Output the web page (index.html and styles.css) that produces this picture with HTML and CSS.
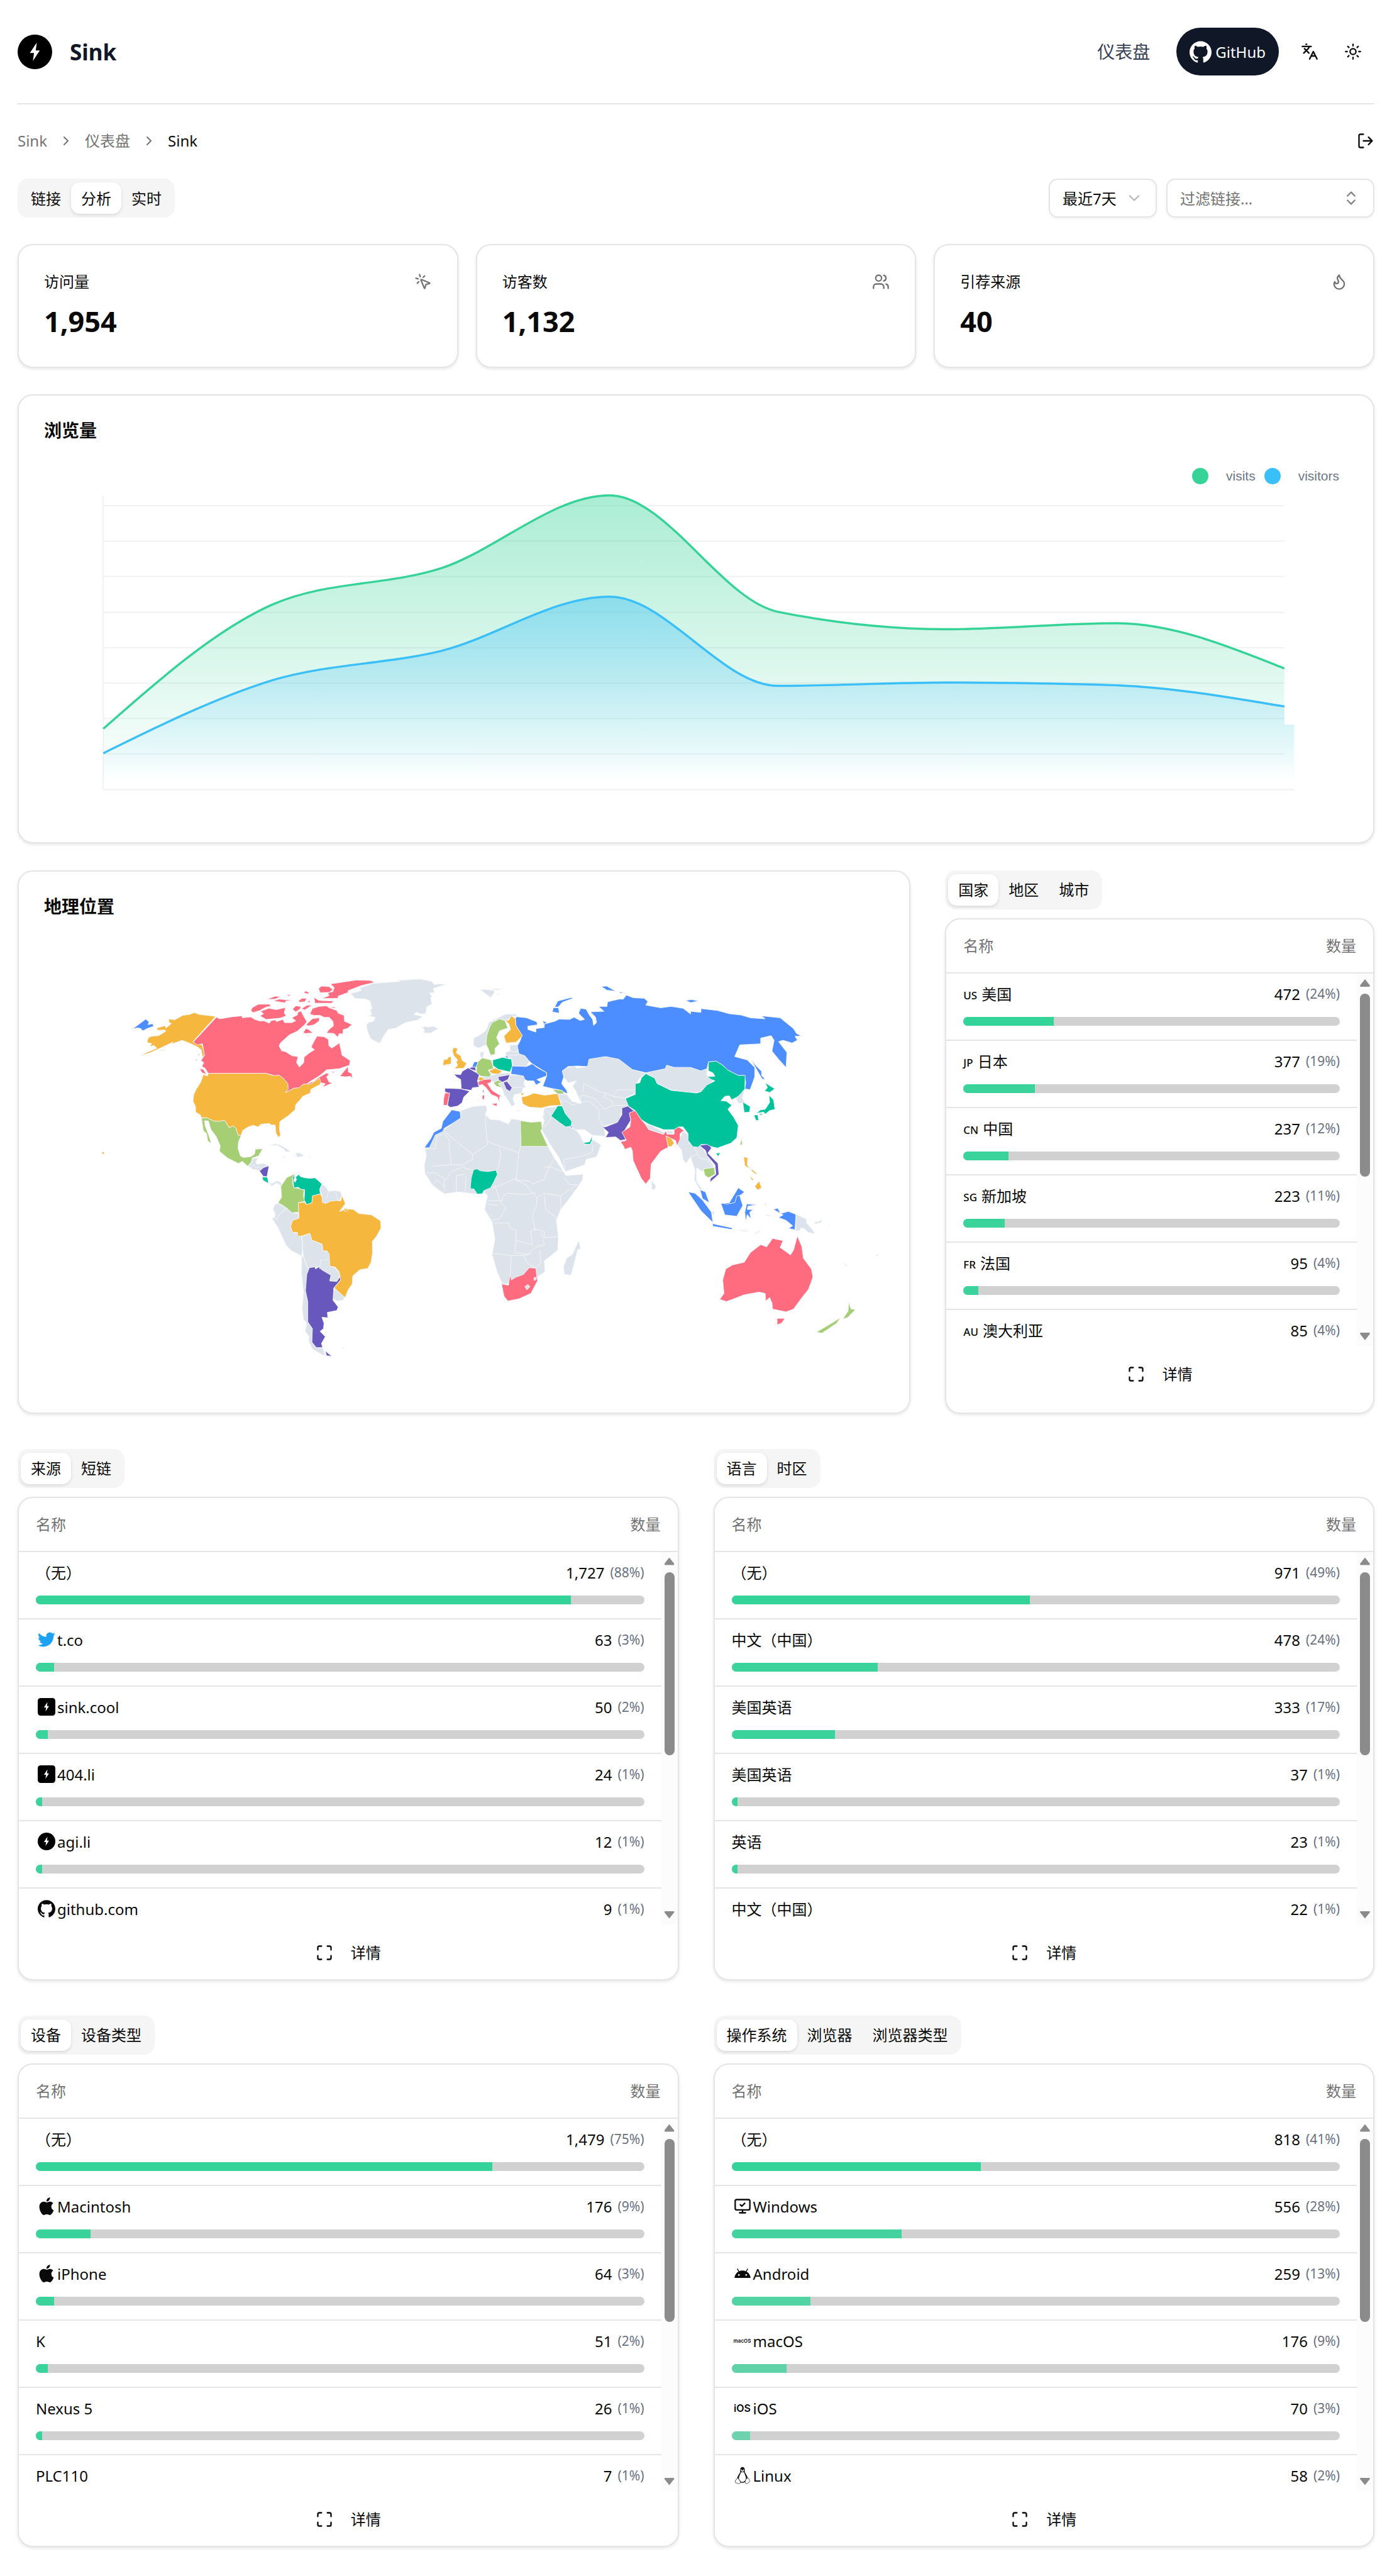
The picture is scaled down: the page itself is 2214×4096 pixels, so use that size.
FILE: index.html
```html
<!DOCTYPE html>
<html lang="zh-CN">
<head>
<meta charset="utf-8">
<meta name="viewport" content="width=device-width, initial-scale=1">
<title>Sink</title>
<link rel="stylesheet" href="styles.css">
</head>
<body>
<svg class="sprite" aria-hidden="true">
  <symbol id="i-bolt" viewBox="0 0 24 24"><circle cx="12" cy="12" r="12" fill="#000"/><path d="M13.3 5.6 8.5 12.8h2.9l-.8 5.5L15.4 11h-2.8Z" fill="#fff"/></symbol>
  <symbol id="i-bolt-square" viewBox="0 0 24 24"><rect width="24" height="24" rx="4" fill="#000"/><path d="M13.3 5.6 8.5 12.8h2.9l-.8 5.5L15.4 11h-2.8Z" fill="#fff"/></symbol>
  <symbol id="i-github" viewBox="0 0 24 24"><path fill="currentColor" d="M12 .297c-6.63 0-12 5.373-12 12 0 5.303 3.438 9.8 8.205 11.385.6.113.82-.258.82-.577 0-.285-.01-1.04-.015-2.04-3.338.724-4.042-1.61-4.042-1.61C4.422 18.07 3.633 17.7 3.633 17.7c-1.087-.744.084-.729.084-.729 1.205.084 1.838 1.236 1.838 1.236 1.07 1.835 2.809 1.305 3.495.998.108-.776.417-1.305.76-1.605-2.665-.3-5.466-1.332-5.466-5.93 0-1.31.465-2.38 1.235-3.22-.135-.303-.54-1.523.105-3.176 0 0 1.005-.322 3.3 1.23.96-.267 1.98-.399 3-.405 1.02.006 2.04.138 3 .405 2.28-1.552 3.285-1.23 3.285-1.23.645 1.653.24 2.873.12 3.176.765.84 1.23 1.91 1.23 3.22 0 4.61-2.805 5.625-5.475 5.92.42.36.81 1.096.81 2.22 0 1.606-.015 2.896-.015 3.286 0 .315.21.69.825.57C20.565 22.092 24 17.592 24 12.297c0-6.627-5.373-12-12-12"/></symbol>
  <symbol id="i-twitter" viewBox="0 0 24 24"><path fill="#1da1f2" d="M23.953 4.57a10 10 0 01-2.825.775 4.958 4.958 0 002.163-2.723c-.951.555-2.005.959-3.127 1.184a4.92 4.92 0 00-8.384 4.482C7.69 8.095 4.067 6.13 1.64 3.162a4.822 4.822 0 00-.666 2.475c0 1.71.87 3.213 2.188 4.096a4.904 4.904 0 01-2.228-.616v.06a4.923 4.923 0 003.946 4.827 4.996 4.996 0 01-2.212.085 4.936 4.936 0 004.604 3.417 9.867 9.867 0 01-6.102 2.105c-.39 0-.779-.023-1.17-.067a13.995 13.995 0 007.557 2.209c9.053 0 13.998-7.496 13.998-13.985 0-.21 0-.42-.015-.63A9.935 9.935 0 0024 4.59z"/></symbol>
  <symbol id="i-apple" viewBox="0 0 24 24"><path fill="currentColor" d="M12.152 6.896c-.948 0-2.415-1.078-3.96-1.04-2.04.027-3.91 1.183-4.961 3.014-2.117 3.675-.546 9.103 1.519 12.09 1.013 1.454 2.208 3.09 3.792 3.039 1.52-.065 2.09-.987 3.935-.987 1.831 0 2.35.987 3.96.948 1.637-.026 2.676-1.48 3.676-2.948 1.156-1.688 1.636-3.325 1.662-3.415-.039-.013-3.182-1.221-3.22-4.857-.026-3.04 2.48-4.494 2.597-4.559-1.429-2.09-3.623-2.324-4.39-2.376-2-.156-3.675 1.09-4.61 1.09zM15.53 3.83c.843-1.012 1.4-2.427 1.245-3.83-1.207.052-2.662.805-3.532 1.818-.78.896-1.454 2.338-1.273 3.714 1.338.104 2.715-.688 3.559-1.701"/></symbol>
  <symbol id="i-android" viewBox="0.8 0 22.4 24"><path fill="currentColor" d="M17.6 9.48l1.84-3.18c.16-.31.04-.69-.26-.85-.29-.15-.65-.06-.83.22l-1.88 3.24c-2.86-1.21-6.08-1.21-8.94 0L5.65 5.67c-.19-.29-.58-.38-.87-.2-.28.18-.37.54-.22.83L6.4 9.48C3.3 11.25 1.28 14.44 1 18h22c-.28-3.56-2.3-6.75-5.4-8.52zM7 15.25c-.69 0-1.25-.56-1.25-1.25s.56-1.25 1.25-1.25 1.25.56 1.25 1.25-.56 1.25-1.25 1.25zm10 0c-.69 0-1.25-.56-1.25-1.25s.56-1.25 1.25-1.25 1.25.56 1.25 1.25-.56 1.25-1.25 1.25z"/></symbol>
  <symbol id="i-monitor" viewBox="0 0 24 24"><g class="line"><path d="m9 10 2 2 4-4"/><rect width="20" height="14" x="2" y="3" rx="2"/><path d="M12 17v4M8 21h8"/></g></symbol>
  <symbol id="i-linux" viewBox="0 0 24 24"><path d="M12 .6c-2.1 0-3.2 1.7-3.1 3.7.1 2.700-.2 4-1.600 6-1.300 1.900-2.600 4.100-2.500 6.200L8 20.500c.8 1.200 2.200 1.500 4 1.500s3-.4 3.900-1.500l3.100-4c.1-2.200-1.100-4.300-2.400-6.200-1.300-2-1.700-3.300-1.600-6C15.100 2.300 14.100.6 12 .6Z" fill="#111"/><path d="M12 7.600c-.9.600-1.700.3-2.200 0-.3 2.400-2.100 4.900-2.700 7.200-.4 1.700.2 2.800 1.300 4.200 1 1.300 2.100 2 3.600 2s2.700-.8 3.500-2.100c.9-1.500 1.500-2.600 1.100-4.200-.6-2.200-2.100-4.800-2.500-7.100-.600.500-1.400.6-2.100 0Z" fill="#fff"/><path d="M4.900 15.900c.9-.3 1.600.8 2.400 2 .8 1.300 2.100 2.400 1.900 3.600-.1 1.300-1.500 2-2.900 1.700-1.300-.3-2.200-.9-3.700-1.200-.8-.2-.3-1.500-.5-2.500-.2-1.300 1.200-.8 1.600-1.600.4-.7.400-1.700 1.200-2Zm13.800-.1c-1 .1-1.700.9-2.300 2.200-.6 1.400-1.100 3-.6 4.200.5 1.300 1.900 1.300 2.900.6 1-.8 1.900-1.400 3.200-2.200.6-.5-.2-1.200-.6-2-.5-.9.100-1.900-.8-2.300-.6-.3-1.100-.6-1.800-.5Z" fill="#fff" stroke="#111" stroke-width=".6"/><path d="M10.500 3.900a.7.9 0 1 0 .1 0Zm2.700 0a.7.9 0 1 0 .1 0ZM10 6.200 12 5.300l2 .9-2 1.100Z" fill="#fff"/></symbol>
  <symbol id="i-maximize" viewBox="0 0 24 24"><path class="line" d="M8 3H5a2 2 0 0 0-2 2v3M21 8V5a2 2 0 0 0-2-2h-3M3 16v3a2 2 0 0 0 2 2h3M16 21h3a2 2 0 0 0 2-2v-3"/></symbol>
  <symbol id="i-chevron-right" viewBox="0 0 24 24"><path class="line" d="m9 18 6-6-6-6"/></symbol>
</svg>

<div class="page">
  <header class="header">
    <a class="brand" href="#"><svg class="brand-mark" aria-hidden="true"><use href="#i-bolt"/></svg><span>Sink</span></a>
    <nav class="nav">
      <a class="nav-link" href="#">仪表盘</a>
      <a class="github" href="#"><svg aria-hidden="true"><use href="#i-github"/></svg>GitHub</a>
      <div class="nav-tools">
        <button class="icon-btn" type="button" aria-label="语言"><svg class="icon line" viewBox="0 0 24 24"><path d="m5 8 6 6M4 14l6-6 2-3M2 5h12M7 2h1M22 22l-5-10-5 10M14 18h6"/></svg></button>
        <button class="icon-btn" type="button" aria-label="主题"><svg class="icon line" viewBox="0 0 24 24"><circle cx="12" cy="12" r="4"/><path d="M12 2v2M12 20v2M4.930 4.930l1.410 1.410M17.660 17.660l1.410 1.410M2 12h2M20 12h2M6.340 17.660l-1.410 1.410M19.070 4.930l-1.410 1.410"/></svg></button>
      </div>
    </nav>
  </header>

  <div class="crumb-row">
    <nav class="crumbs">
      <a href="#">Sink</a><svg aria-hidden="true"><use href="#i-chevron-right"/></svg><a href="#">仪表盘</a><svg aria-hidden="true"><use href="#i-chevron-right"/></svg><span class="current">Sink</span>
    </nav>
    <button class="logout" type="button" aria-label="退出"><svg class="icon line" viewBox="0 0 24 24"><path d="M9 21H5a2 2 0 0 1-2-2V5a2 2 0 0 1 2-2h4M16 17l5-5-5-5M21 12H9"/></svg></button>
  </div>

  <div class="toolbar">
    <div class="tabs"><button type="button">链接</button><button type="button" class="active">分析</button><button type="button">实时</button></div>
    <div class="filters">
      <label class="field"><select aria-label="时间范围"><option>最近7天</option></select><svg class="icon line faded muted" viewBox="0 0 24 24"><path d="m6 9 6 6 6-6"/></svg></label>
      <label class="field field-wide"><input type="text" placeholder="过滤链接..." aria-label="过滤链接"><svg class="icon line faded" viewBox="0 0 24 24"><path d="m7 15 5 5 5-5M7 9l5-5 5 5"/></svg></label>
    </div>
  </div>

  <section class="stats">
    <div class="card stat"><div class="stat-head"><span>访问量</span><svg class="icon line" viewBox="0 0 24 24"><path d="M14 4.100 12 6M5.100 8l-2.900-.8M6 12l-1.900 2M7.200 2.200 8 5.100M9.037 9.690a.498.498 0 0 1 .653-.653l11 4.500a.5.5 0 0 1-.074.949l-4.349 1.041a1 1 0 0 0-.740.739l-1.040 4.350a.5.5 0 0 1-.950.074z"/></svg></div><strong>1,954</strong></div>
    <div class="card stat"><div class="stat-head"><span>访客数</span><svg class="icon line" viewBox="0 0 24 24"><path d="M16 21v-2a4 4 0 0 0-4-4H6a4 4 0 0 0-4 4v2"/><circle cx="9" cy="7" r="4"/><path d="M22 21v-2a4 4 0 0 0-3-3.870M16 3.130a4 4 0 0 1 0 7.750"/></svg></div><strong>1,132</strong></div>
    <div class="card stat"><div class="stat-head"><span>引荐来源</span><svg class="icon line" viewBox="0 0 24 24"><path d="M8.500 14.500A2.500 2.500 0 0 0 11 12c0-1.380-.5-2-1-3-1.072-2.143-.224-4.054 2-6 .5 2.500 2 4.900 4 6.500 2 1.600 3 3.500 3 5.500a7 7 0 1 1-14 0c0-1.153.433-2.294 1-3a2.500 2.500 0 0 0 2.500 2.500z"/></svg></div><strong>40</strong></div>
  </section>

  <section class="card panel">
    <h2>浏览量</h2>
    <div class="legend"><span class="key key-visits">visits</span><span class="key key-visitors">visitors</span></div>
    <svg class="plot" viewBox="82 900 2398 600" role="img" aria-label="浏览量">
      <defs>
        <linearGradient id="g-visits" x1="0" y1="909" x2="0" y2="1440" gradientUnits="userSpaceOnUse"><stop offset="0" stop-color="#36d399" stop-opacity=".42"/><stop offset="1" stop-color="#36d399" stop-opacity="0"/></linearGradient>
        <linearGradient id="g-visitors" x1="0" y1="1095" x2="0" y2="1430" gradientUnits="userSpaceOnUse"><stop offset="0" stop-color="#3abff8" stop-opacity=".42"/><stop offset="1" stop-color="#3abff8" stop-opacity="0"/></linearGradient>
      </defs>
      <path class="grid" d="M191 928H2363M191 993H2363M191 1058H2363M191 1124H2363M191 1189H2363M191 1254H2363M191 1319H2363M191 1384H2363M191 1450H2381M191 909V1450"/>
      <path fill="url(#g-visits)" d="M191 1338C294 1247 398 1156 501 1110C605 1065 708 1076 812 1043C915 1009 1018 909 1122 909C1226 909 1329 1102 1432 1123C1536 1144 1639 1155 1743 1155C1846 1155 1950 1144 2053 1144C2157 1144 2260 1186 2363 1227V1330H2381V1450H191Z"/>
      <path fill="url(#g-visitors)" d="M191 1383C294 1332 398 1281 501 1249C605 1218 708 1220 812 1195C915 1169 1018 1095 1122 1095C1226 1095 1329 1259 1432 1259C1536 1259 1639 1253 1743 1253C1846 1253 1950 1255 2053 1258C2157 1262 2260 1280 2363 1297V1330H2381V1450H191Z"/>
      <path class="curve curve-visits" d="M191 1338C294 1247 398 1156 501 1110C605 1065 708 1076 812 1043C915 1009 1018 909 1122 909C1226 909 1329 1102 1432 1123C1536 1144 1639 1155 1743 1155C1846 1155 1950 1144 2053 1144C2157 1144 2260 1186 2363 1227"/>
      <path class="curve curve-visitors" d="M191 1383C294 1332 398 1281 501 1249C605 1218 708 1220 812 1195C915 1169 1018 1095 1122 1095C1226 1095 1329 1259 1432 1259C1536 1259 1639 1253 1743 1253C1846 1253 1950 1255 2053 1258C2157 1262 2260 1280 2363 1297"/>
    </svg>
  </section>

  <section class="geo">
    <div class="card panel geo-map">
      <h2>地理位置</h2>
      <svg class="map" viewBox="82 1699 1544 850" role="img" aria-label="地理位置">
        <g transform="translate(160 1760) scale(.4719 .4974)">
          <path class="none" d="M1030 132 1070 122 1065 112 1115 95 1220 88 1215 84 1300 79 1345 88 1355 100 1375 97 1400 100 1370 107 1350 114 1355 128 1335 130 1345 143 1340 150 1345 170 1325 182 1320 207 1298 207 1285 200 1275 210 1308 217 1290 230 1240 240 1205 260 1175 265 1160 285 1142 316 1108 300 1096 275 1090 250 1097 240 1118 235 1125 220 1098 215 1112 210 1105 195 1112 187 1105 160 1085 152 1045 150ZM1303 254 1312 258 1318 253 1330 257 1350 253 1370 262 1340 278 1312 277 1318 268ZM995 1438 1005 1440 998 1443Z
            M715 694 735 687 760 695 780 706 795 717 775 716 768 706 740 692ZM812 722 830 721 848 731 826 737 808 734 820 732ZM762 736 777 738 768 739ZM862 736 870 737 865 738Z
            M630 770 645 755 643 742 668 740 660 755 664 763 690 760 710 768 690 774 674 788 665 784 650 782ZM709 830 722 835 742 824 758 832 760 845 750 836 740 832 722 843Z
            M917 836 935 850 943 863 968 860 990 865 995 880 985 895 970 900 926 908 915 900 918 880 908 857ZM733 912 746 907 776 924 770 935 750 950 742 967 733 962 736 948 727 930Z
            M724 965 730 958 742 967 750 950 776 924 800 942 824 945 828 963 803 970 795 995 808 1018 822 1016 838 1030 842 1070 838 1102 795 1080 778 1062 745 995Z
            M838 1030 870 1018 878 1043 918 1060 922 1083 940 1085 947 1100 948 1140 968 1145 984 1165 985 1185 975 1195 947 1194 952 1173 908 1150 905 1142 890 1142 870 1148 860 1145 845 1105 842 1070ZM963 1222 1005 1250 1000 1265 975 1268 960 1258Z
            M838 1102 845 1105 860 1145 868 1148 858 1170 853 1230 862 1270 862 1325 880 1370 878 1420 895 1440 920 1442 930 1470 915 1465 880 1445 865 1415 868 1400 852 1380 858 1350 845 1335 840 1290 846 1240 838 1170Z"/>
          <path class="orange" d="M503 217 414 311 450 322 461 357 452 367 447 340 430 328 400 315 373 305 330 319 338 311 312 323 278 338 245 352 208 363 240 348 275 334 262 324 248 328 254 317 236 313 240 297 253 290 282 288 310 271 305 267 277 268 274 260 306 251 310 260 331 243 322 240 320 227 345 229 375 213 400 210 421 203 440 210 470 213ZM282 344 298 339 300 342ZM434 357 441 354 438 364ZM60 720 66 716 70 722 64 727Z
            M474 427 700 427 715 432 735 436 750 433 770 448 784 465 786 485 775 498 808 482 828 480 845 467 875 466 905 444 913 452 910 468 890 478 874 486 872 500 842 512 832 525 815 542 812 562 785 584 753 605 751 630 755 655 748 664 738 648 735 618 720 618 712 612 680 615 668 625 650 619 630 625 608 638 602 657 590 655 582 630 570 621 556 628 538 601 520 604 498 604 468 591 448 591 443 580 425 570 425 550 415 530 418 505 427 487 445 460 455 432 472 437Z"/>
          <path class="blue" d="M180 263 231 227 244 238 239 247 258 244 262 253 238 261 219 270 212 262 200 259Z"/>
          <path class="pink" d="M506 220 520 226 545 222 570 218 607 215 606 222 640 219 655 228 675 234 690 233 712 242 720 232 735 230 740 236 765 228 771 240 800 240 815 233 800 222 822 211 822 202 836 197 845 215 858 236 850 247 820 272 790 285 755 315 750 326 760 344 775 347 800 362 824 366 818 387 829 404 846 388 848 367 868 352 888 340 875 330 888 306 898 290 925 292 935 298 942 302 944 325 955 334 970 325 985 315 992 345 995 360 1027 380 1024 397 985 410 935 414 912 433 870 458 860 465 885 457 905 442 935 426 945 430 935 440 945 460 960 462 920 478 930 465 912 462 908 444 875 466 845 467 828 480 808 482 775 498 786 485 784 465 770 448 750 433 735 436 700 427 474 427 462 408 450 402 457 387 446 380 460 360 452 318 432 322 416 312Z
            M1018 402 1020 422 1033 428 1036 445 1028 438 1010 440 987 438ZM441 411 455 412 467 430 450 425ZM425 376 432 376 427 381ZM950 97 1050 83 1105 84 1122 91 1070 103 1018 122 1020 128 980 142 980 150 915 151 945 140 940 130 960 125 965 110ZM904 115 915 105 945 107 960 118 945 128 910 129ZM886 147 905 158 963 160 955 168 920 168 890 168ZM676 215 690 207 678 198 710 187 740 192 775 184 770 205 778 215 755 223 700 228ZM640 193 648 183 670 172 713 172 718 180 700 182 675 195 648 203ZM727 160 750 153 803 157 775 160 775 167 750 163ZM703 154 735 142 755 144 735 153ZM825 160 840 150 858 150 850 163 830 164ZM845 129 855 123 868 130 862 134ZM780 138 797 136 788 142ZM803 190 815 178 835 180 832 190 815 200ZM838 188 860 175 878 176 850 193ZM860 162 872 158 868 167ZM870 208 880 188 905 180 935 178 945 185 975 195 980 205 1003 213 1005 235 1034 247 1015 262 1000 265 998 282 985 280 978 293 965 280 935 278 945 265 962 252 960 235 945 220 925 220 910 213 885 213ZM855 248 880 225 908 222 905 235 885 248 865 252ZM845 275 855 262 865 265 882 278 850 280ZM855 288 865 287 858 291ZM945 182 970 182 965 187ZM955 420 968 422 960 425Z"/>
          <path class="green" d="M448 593 468 591 498 604 520 604 538 601 556 628 570 621 582 630 590 655 602 657 592 680 590 705 600 733 612 738 640 735 655 725 658 707 686 706 670 732 645 740 642 755 628 770 607 752 592 760 550 740 518 715 521 695 505 660 485 635 475 603 460 602 462 620 470 640 478 660 486 687 472 675 468 650 455 638ZM815 797 802 812 803 835 808 850 830 853 847 858 845 880 850 900 825 905 828 962 824 940 800 942 780 925 765 915 746 905 760 885 757 845 780 812Z"/>
          <path class="violet" d="M674 788 690 775 711 769 703 809 688 807ZM868 1145 890 1142 892 1150 905 1142 915 1152 952 1173 947 1194 975 1196 988 1178 990 1190 963 1220 960 1265 980 1290 975 1303 938 1310 940 1330 917 1328 925 1350 923 1370 910 1380 930 1400 915 1425 920 1440 895 1440 878 1420 880 1370 862 1345 862 1270 853 1230 858 1170ZM930 1453 956 1472 935 1470Z"/>
          <path class="teal" d="M684 810 705 811 709 834 688 822ZM803 812 812 800 808 822 812 830 818 820 815 810 828 800 832 808 850 813 870 815 890 813 917 836 908 855 911 872 880 880 878 905 858 912 848 895 850 857 835 855 825 848 808 850Z"/>
          <path class="orange" d="M911 872 918 885 918 903 930 908 950 900 970 897 990 898 996 880 1008 908 985 938 1005 930 1020 928 1040 930 1060 945 1110 950 1145 972 1147 998 1130 1028 1113 1048 1114 1090 1108 1125 1095 1148 1065 1152 1037 1175 1035 1205 1020 1225 1007 1255 965 1220 990 1190 984 1160 968 1142 948 1140 945 1095 937 1083 922 1083 918 1058 878 1043 870 1018 838 1028 822 1028 822 1015 803 1015 795 992 803 970 828 962 825 905 848 903 858 912 878 905 880 880ZM1003 925 1022 928 1015 937 1003 936Z"/>
          <path class="border" d="M943 863 935 890M970 865 980 898M842 1070 838 1030M908 1150 912 1118 942 1115M658 764 640 775M674 775 655 775"/>
        </g>
        <g transform="translate(760 1760) scale(.5485 .4974)">
          <path class="none" d="M225 117 272 120 272 130 260 147ZM262 115 304 115 280 120ZM282 130 290 137 284 137ZM203 298 225 285 245 268 255 240 280 225 310 209 345 208 348 218 332 215 325 225 310 232 290 226 275 232 262 255 252 285 247 310 248 320 220 334 203 325ZM225 350 238 347 235 368 226 368ZM325 323 352 322 350 345 358 358 378 360 390 382 380 402 335 400 330 372 312 365 310 350 325 345Z
            M258 436 285 428 325 425 325 434 360 432 375 442 372 470 380 478 368 482 365 500 340 505 335 520 342 545 330 548 315 520 305 505 300 485 285 465 262 455 235 448 232 440ZM345 562 362 566 350 567Z
            M497 412 540 400 550 408 585 402 583 377 645 363 690 375 735 413 780 427 760 445 745 470 748 500 710 518 722 540 725 548 700 560 695 590 685 608 640 622 645 660 600 655 575 635 540 635 520 605 500 560 497 535 485 503 515 505 532 530 565 540 545 490 535 475 548 455 520 462 497 430Z
            M782 427 820 412 845 410 850 397 875 405 930 405 965 418 985 410 985 435 1012 440 995 470 965 495 935 500 865 488 818 465 810 445Z
            M440 555 485 550 500 548 510 575 532 605 530 625 545 635 560 655 575 690 595 690 603 672 630 692 615 735 580 745 575 765 510 790 490 740 460 690 432 635 440 600 435 590ZM780 615 800 620 845 648 840 657 800 640 778 628ZM848 640 870 640 870 650 852 650ZM800 822 815 845 808 858 800 855Z
            M905 640 922 655 925 685 945 700 965 692 985 730 1005 765 1010 780 975 778 970 790 950 775 950 825 970 858 960 855 943 820 945 785 930 735 915 760 905 745 900 710 885 690 895 665ZM1080 515 1110 492 1103 518 1112 535 1090 538ZM1283 948 1318 965 1318 980 1335 1000 1348 1020 1325 1015 1310 1000 1300 998 1295 1008 1282 1010ZM1343 978 1360 975 1370 966 1368 978 1350 983ZM1393 980 1397 985 1395 987ZM1443 1125 1458 1142 1450 1138ZM1552 1097 1558 1097 1558 1101 1552 1101ZM555 1045 562 1075 552 1078 530 1172 508 1170 505 1140 515 1110 535 1095Z
            M160 565 200 550 245 546 248 560 242 580 260 598 290 600 320 615 330 595 358 600 395 608 430 605 430 640 452 697 475 742 495 775 512 805 570 800 568 820 550 850 520 895 495 930 480 970 487 1030 485 1080 440 1120 442 1160 418 1178 410 1200 300 1205 282 1160 265 1095 275 1040 265 975 240 930 250 880 238 862 215 873 150 865 105 872 65 840 40 795 38 765 45 730 40 705 55 702 75 655 105 635 135 610 160 592Z"/>
          <path class="border" d="M570 495 572 465 600 480 625 495 645 500 670 512 685 488 748 488M563 530 560 510 580 510 610 520 640 560 660 550 690 545 725 545M622 560 625 600 640 622M497 530 515 530 535 545 560 535 590 530 622 560M645 500 640 515 668 530 670 545M670 512 710 518M505 745 560 735 600 720 603 690M440 555 465 585 455 605 440 625M505 745 510 790M325 434 320 460M332 480 370 478M303 460 280 470M325 345 352 348M312 365 355 358M945 705 960 740 985 745 1005 775M930 735 950 725
            M105 642 200 727 250 690 242 600 248 565M65 770 128 765 120 670 105 650M40 705 75 705 80 660 105 650M128 765 165 765 200 745 200 727M250 680 355 720 360 697M172 770 175 780 203 783M355 720 345 820 390 825 400 835 440 820 455 775 475 742M283 785 295 730 290 700M262 850 285 845 345 815M440 775 460 772 500 790M550 838 525 838 505 810M415 885 380 840 345 820M415 885 440 870 495 880 550 838M495 880 495 935M250 898 300 898 300 885 315 870 375 875 410 868M275 840 290 895 310 925 290 965 265 968M270 980 320 980 325 1000 345 1005 345 1045 400 1060 395 1010 410 1005 400 960 405 935 415 915 415 885M440 880 445 930 480 960M400 1000 440 1010 440 1035 487 1030M345 1045 342 1090 385 1095 410 1070 440 1060 430 1015M265 1092 330 1100 370 1100 395 1095M330 1100 325 1190M370 1100 385 1130 412 1145 428 1130 425 1080M105 865 105 820M145 865 145 805 175 800M175 865 178 805M45 795 75 795 110 820 130 790 172 770M65 840 80 820 105 845M250 910 285 915"/>
          <path class="blue" d="M348 218 380 222 415 237 417 248 385 253 385 265 412 275 412 262 440 258 440 245 475 235 490 227 525 228 540 220 560 232 575 228 555 205 562 187 580 190 590 210 602 228 605 250 615 240 612 220 595 200 640 198 622 180 650 180 652 163 690 153 705 153 715 138 738 148 775 150 787 162 780 175 830 185 865 180 905 187 930 208 930 198 965 202 965 188 1020 195 1060 207 1100 212 1130 222 1180 226 1168 215 1230 222 1275 262 1285 280 1302 290 1280 290 1288 305 1270 315 1240 305 1225 310 1253 350 1250 405 1225 375 1203 345 1210 305 1200 288 1165 297 1165 318 1095 322 1078 365 1120 378 1145 405 1145 440 1130 487 1112 485 1115 460 1110 435 1090 435 1055 415 1035 395 1015 382 990 385 985 410 965 418 930 405 875 405 850 397 845 410 780 425 735 413 690 375 645 365 590 375 585 402 550 400 520 402 500 418 505 440 498 465 515 490 518 503 490 488 465 483 435 475 448 437 448 425 400 392 388 380 375 362 355 355 350 325 358 310 365 288 345 250 343 225Z
            M467 200 470 185 488 185 490 205ZM475 182 485 160 530 147 536 150 500 165 487 182ZM630 106 650 105 660 112 680 124 650 120ZM690 126 710 128 695 131ZM913 157 935 155 957 160 930 166ZM1132 375 1150 400 1168 420 1168 435 1180 450 1170 448 1150 410ZM433 232 450 240 440 245ZM305 368 315 363 323 370ZM198 403 205 385 218 384 212 405ZM332 400 380 402 400 392 415 405 448 425 447 437 415 450 430 460 412 470 405 455 385 455 375 450 370 437 345 432 328 430ZM525 620 532 619 535 632ZM38 702 60 668 70 645 95 630 100 605 130 562 158 568 160 592 135 610 105 630 100 642 75 655 55 702Z
            M962 857 980 865 993 905 970 890ZM922 865 945 870 970 895 1000 940 1005 978 965 935ZM1003 982 1035 990 1070 998 1068 1004 1005 992ZM1032 908 1060 905 1090 850 1110 865 1095 880 1105 915 1085 955 1045 950ZM1118 910 1155 912 1122 918 1120 930 1140 930 1128 940 1133 965 1120 948 1115 975 1112 940ZM1208 930 1222 925 1232 945 1258 937 1283 948 1280 1005 1258 1000 1272 990 1250 970 1225 960 1240 950ZM1178 903 1184 915 1180 912ZM1185 950 1202 954 1188 953ZM1145 1020 1165 1008 1150 1015ZM1090 1005 1130 1010 1110 1010ZM1005 935 1010 948 1005 945Z"/>
          <path class="green" d="M290 226 308 232 318 260 290 270 280 295 290 318 275 335 275 357 260 360 252 335 245 320 247 290 255 262 265 240ZM218 385 232 370 262 378 270 410 252 415 262 432 255 440 228 438 213 425 213 400ZM270 462 285 453 303 460 285 465 297 480 280 475ZM467 486 500 490 507 503 485 503ZM360 602 395 608 430 605 433 630 428 640 452 697 362 697ZM1095 690 1103 667 1103 692ZM973 780 1010 775 1012 800 990 813 978 803ZM1460 1273 1468 1298 1483 1300 1455 1330 1440 1335 1458 1305ZM1352 1383 1395 1355 1432 1330 1420 1350 1370 1387Z"/>
          <path class="orange" d="M308 231 320 232 330 215 343 225 345 250 367 288 345 312 312 315 305 290 327 265 322 245ZM135 332 150 335 145 352 160 362 165 380 180 390 170 408 138 410 150 398 145 385 150 378 137 362 132 345ZM100 398 103 377 115 375 120 366 128 366 128 392ZM217 450 225 440 240 447 230 457ZM255 418 275 408 300 420 285 430 265 428ZM363 515 385 510 405 500 440 508 485 502 497 545 460 547 430 555 390 552 368 540ZM362 500 374 500 365 510ZM435 585 440 574 437 588ZM846 657 860 658 875 685 865 698 855 697ZM876 680 884 708 879 695ZM1108 735 1122 740 1120 765 1130 780 1112 768ZM1128 780 1140 785 1155 800 1145 797ZM1145 845 1160 825 1168 850 1155 858ZM1128 803 1142 822 1135 822Z"/>
          <path class="violet" d="M138 430 160 432 165 420 185 407 213 425 222 433 216 455 222 478 200 480 195 490 162 485 160 450 145 440ZM188 406 208 403 212 418 195 413ZM107 482 160 484 190 493 170 515 165 535 150 548 125 553 116 545 122 502 107 495ZM285 440 325 432 318 450 300 460 288 452ZM303 460 315 457 332 480 325 494 312 485ZM233 492 238 488 237 502ZM635 625 645 625 685 608 700 580 700 555 720 548 743 568 725 575 730 600 705 645 712 672 695 675 680 662 645 664 655 645ZM960 693 990 688 1000 703 988 722 1022 760 1025 800 995 830 997 815 1015 800 1012 765 985 730 980 712Z"/>
          <path class="pink" d="M107 500 123 500 115 545 102 545 103 520ZM218 458 240 450 262 448 262 460 250 465 265 490 298 513 290 513 290 533 283 515 262 505 245 480 232 468 220 472ZM262 540 283 537 280 549ZM232 508 240 508 239 523 232 523ZM745 565 765 598 780 618 790 635 840 653 846 640 852 652 875 652 875 635 890 625 908 638 895 650 895 670 885 695 880 675 870 670 848 658 855 700 830 715 798 762 795 815 780 836 765 815 738 750 735 712 730 700 710 708 705 695 695 680 715 675 700 645 727 625 730 600 725 573Z
            M297 1205 320 1210 325 1172 330 1190 345 1180 370 1170 390 1145 412 1147 415 1180 418 1192 395 1240 355 1260 318 1268 305 1250ZM1028 1262 1042 1240 1038 1190 1048 1150 1070 1135 1110 1125 1130 1090 1165 1060 1185 1068 1205 1037 1240 1045 1230 1070 1265 1098 1275 1080 1288 1028 1303 1068 1308 1110 1335 1150 1340 1180 1325 1225 1300 1260 1275 1298 1250 1308 1205 1298 1203 1275 1195 1255 1182 1268 1180 1240 1160 1235 1110 1245 1080 1258 1050 1270ZM1220 1332 1246 1332 1235 1350 1220 1356Z"/>
          <path class="none" d="M375 1215 385 1207 392 1215 382 1227ZM405 1182 412 1180 413 1190 406 1192Z"/>
          <path class="teal" d="M267 378 300 368 330 375 333 400 325 422 285 412 268 398ZM203 783 215 780 225 787 250 790 278 785 283 800 270 830 260 850 238 860 232 872 215 873 205 855 192 853 195 815ZM463 585 485 547 500 548 510 575 532 605 530 622 512 625 490 608ZM572 683 592 680 600 658 600 675 593 690 575 688Z
            M780 428 810 445 818 465 865 490 950 500 965 495 985 470 1012 455 1000 450 985 440 1012 438 1005 425 990 418 990 385 1015 382 1035 395 1055 415 1090 435 1113 435 1112 485 1090 512 1068 525 1060 510 1045 512 1032 528 1050 530 1068 545 1055 560 1075 590 1090 620 1085 665 1065 685 1020 703 1000 698 985 690 965 690 955 700 938 698 922 675 922 650 905 625 890 625 875 635 840 635 790 615 765 598 745 565 722 548 712 520 745 505 745 465 760 462 765 445Z
            M1016 722 1030 720 1022 735ZM1105 533 1130 550 1128 570 1110 572ZM1180 462 1212 484 1195 498 1178 492 1188 480ZM1193 508 1208 525 1213 560 1195 565 1180 578 1175 570 1150 575 1165 562 1180 560 1195 535ZM1142 582 1155 580 1158 600 1150 602ZM1160 577 1175 575 1165 582Z"/>
          <path class="border" d="M1032 905 1050 910 1078 905 1085 880 1100 876"/>
        </g>
      </svg>
    </div>

    <div class="column">
      <div class="tabs"><button type="button" class="active">国家</button><button type="button">地区</button><button type="button">城市</button></div>
      <div class="card list">
        <div class="list-body">
          <table>
            <thead><tr><th scope="col">名称</th><th scope="col">数量</th></tr></thead>
            <tbody>
              <tr><td><small>US</small>美国</td><td>472 <i>(24%)</i></td><td class="bar"><div style="width:24%"></div></td></tr>
              <tr><td><small>JP</small>日本</td><td>377 <i>(19%)</i></td><td class="bar"><div style="width:19%"></div></td></tr>
              <tr><td><small>CN</small>中国</td><td>237 <i>(12%)</i></td><td class="bar"><div style="width:12%"></div></td></tr>
              <tr><td><small>SG</small>新加坡</td><td>223 <i>(11%)</i></td><td class="bar"><div style="width:11%"></div></td></tr>
              <tr><td><small>FR</small>法国</td><td>95 <i>(4%)</i></td><td class="bar"><div style="width:4%"></div></td></tr>
              <tr><td><small>AU</small>澳大利亚</td><td>85 <i>(4%)</i></td><td class="bar"><div style="width:4%"></div></td></tr>
            </tbody>
          </table>
          <div class="scroll" aria-hidden="true"><b class="up"></b><b class="thumb"></b><b class="down"></b></div>
        </div>
        <button class="more" type="button"><svg aria-hidden="true"><use href="#i-maximize"/></svg>详情</button>
      </div>
    </div>
  </section>

  <section class="pair">
    <div class="column">
      <div class="tabs"><button type="button" class="active">来源</button><button type="button">短链</button></div>
      <div class="card list">
        <div class="list-body">
          <table>
            <thead><tr><th scope="col">名称</th><th scope="col">数量</th></tr></thead>
            <tbody>
              <tr><td>（无）</td><td>1,727 <i>(88%)</i></td><td class="bar"><div style="width:88%"></div></td></tr>
              <tr><td><svg aria-hidden="true"><use href="#i-twitter"/></svg>t.co</td><td>63 <i>(3%)</i></td><td class="bar"><div style="width:3%"></div></td></tr>
              <tr><td><svg aria-hidden="true"><use href="#i-bolt-square"/></svg>sink.cool</td><td>50 <i>(2%)</i></td><td class="bar"><div style="width:2%"></div></td></tr>
              <tr><td><svg aria-hidden="true"><use href="#i-bolt-square"/></svg>404.li</td><td>24 <i>(1%)</i></td><td class="bar"><div style="width:1%"></div></td></tr>
              <tr><td><svg aria-hidden="true"><use href="#i-bolt"/></svg>agi.li</td><td>12 <i>(1%)</i></td><td class="bar"><div style="width:1%"></div></td></tr>
              <tr><td><svg aria-hidden="true"><use href="#i-github"/></svg>github.com</td><td>9 <i>(1%)</i></td><td class="bar"><div style="width:1%"></div></td></tr>
            </tbody>
          </table>
          <div class="scroll" aria-hidden="true"><b class="up"></b><b class="thumb"></b><b class="down"></b></div>
        </div>
        <button class="more" type="button"><svg aria-hidden="true"><use href="#i-maximize"/></svg>详情</button>
      </div>
    </div>
    <div class="column">
      <div class="tabs"><button type="button" class="active">语言</button><button type="button">时区</button></div>
      <div class="card list">
        <div class="list-body">
          <table>
            <thead><tr><th scope="col">名称</th><th scope="col">数量</th></tr></thead>
            <tbody>
              <tr><td>（无）</td><td>971 <i>(49%)</i></td><td class="bar"><div style="width:49%"></div></td></tr>
              <tr><td>中文（中国）</td><td>478 <i>(24%)</i></td><td class="bar"><div style="width:24%"></div></td></tr>
              <tr><td>美国英语</td><td>333 <i>(17%)</i></td><td class="bar"><div style="width:17%"></div></td></tr>
              <tr><td>美国英语</td><td>37 <i>(1%)</i></td><td class="bar"><div style="width:1%"></div></td></tr>
              <tr><td>英语</td><td>23 <i>(1%)</i></td><td class="bar"><div style="width:1%"></div></td></tr>
              <tr><td>中文（中国）</td><td>22 <i>(1%)</i></td><td class="bar"><div style="width:1%"></div></td></tr>
            </tbody>
          </table>
          <div class="scroll" aria-hidden="true"><b class="up"></b><b class="thumb"></b><b class="down"></b></div>
        </div>
        <button class="more" type="button"><svg aria-hidden="true"><use href="#i-maximize"/></svg>详情</button>
      </div>
    </div>
  </section>

  <section class="pair">
    <div class="column">
      <div class="tabs"><button type="button" class="active">设备</button><button type="button">设备类型</button></div>
      <div class="card list">
        <div class="list-body">
          <table>
            <thead><tr><th scope="col">名称</th><th scope="col">数量</th></tr></thead>
            <tbody>
              <tr><td>（无）</td><td>1,479 <i>(75%)</i></td><td class="bar"><div style="width:75%"></div></td></tr>
              <tr><td><svg aria-hidden="true"><use href="#i-apple"/></svg>Macintosh</td><td>176 <i>(9%)</i></td><td class="bar"><div style="width:9%"></div></td></tr>
              <tr><td><svg aria-hidden="true"><use href="#i-apple"/></svg>iPhone</td><td>64 <i>(3%)</i></td><td class="bar"><div style="width:3%"></div></td></tr>
              <tr><td>K</td><td>51 <i>(2%)</i></td><td class="bar"><div style="width:2%"></div></td></tr>
              <tr><td>Nexus 5</td><td>26 <i>(1%)</i></td><td class="bar"><div style="width:1%"></div></td></tr>
              <tr><td>PLC110</td><td>7 <i>(1%)</i></td><td class="bar"><div style="width:1%"></div></td></tr>
            </tbody>
          </table>
          <div class="scroll" aria-hidden="true"><b class="up"></b><b class="thumb"></b><b class="down"></b></div>
        </div>
        <button class="more" type="button"><svg aria-hidden="true"><use href="#i-maximize"/></svg>详情</button>
      </div>
    </div>
    <div class="column">
      <div class="tabs"><button type="button" class="active">操作系统</button><button type="button">浏览器</button><button type="button">浏览器类型</button></div>
      <div class="card list list-fade">
        <div class="list-body">
          <table>
            <thead><tr><th scope="col">名称</th><th scope="col">数量</th></tr></thead>
            <tbody>
              <tr><td>（无）</td><td>818 <i>(41%)</i></td><td class="bar"><div style="width:41%"></div></td></tr>
              <tr><td><svg aria-hidden="true"><use href="#i-monitor"/></svg>Windows</td><td>556 <i>(28%)</i></td><td class="bar"><div style="width:28%"></div></td></tr>
              <tr><td><svg aria-hidden="true"><use href="#i-android"/></svg>Android</td><td>259 <i>(13%)</i></td><td class="bar"><div style="width:13%"></div></td></tr>
              <tr><td><span class="wordmark wordmark-small" aria-hidden="true">macOS</span>macOS</td><td>176 <i>(9%)</i></td><td class="bar"><div style="width:9%"></div></td></tr>
              <tr><td><span class="wordmark" aria-hidden="true">iOS</span>iOS</td><td>70 <i>(3%)</i></td><td class="bar"><div style="width:3%"></div></td></tr>
              <tr><td><svg aria-hidden="true"><use href="#i-linux"/></svg>Linux</td><td>58 <i>(2%)</i></td><td class="bar"><div style="width:2%"></div></td></tr>
            </tbody>
          </table>
          <div class="scroll" aria-hidden="true"><b class="up"></b><b class="thumb"></b><b class="down"></b></div>
        </div>
        <button class="more" type="button"><svg aria-hidden="true"><use href="#i-maximize"/></svg>详情</button>
      </div>
    </div>
  </section>
</div>
</body>
</html>
```
FILE: styles.css
```css
* { box-sizing: border-box; }

body {
  margin: 0;
  background: #fff;
  color: #0a0a0a;
  font: 24px/35px "Noto Sans", "Noto Sans CJK SC", sans-serif;
}

button, input, select {
  font: inherit;
  color: inherit;
  background: none;
  border: 0;
  padding: 0;
  margin: 0;
}

a { color: inherit; text-decoration: none; }
svg { display: block; flex: none; }
.sprite { position: absolute; width: 0; height: 0; }

.line {
  fill: none;
  stroke: currentColor;
  stroke-width: 2;
  stroke-linecap: round;
  stroke-linejoin: round;
}

.icon { width: 28px; height: 28px; }
.faded { opacity: .5; }
.muted { color: #737373; }

.page { padding: 0 28px 44px; }

/* Header */
.header {
  display: flex;
  align-items: center;
  justify-content: space-between;
  height: 166px;
  border-bottom: 2px solid #e5e5e5;
}
.brand {
  display: flex;
  align-items: center;
  gap: 28px;
  font-size: 35px;
  font-weight: 700;
  color: #101828;
}
.brand-mark { width: 55px; height: 55px; }
.nav { display: flex; align-items: center; }
.nav-link { font-size: 28px; color: #364153; margin-right: 42px; }
.github {
  display: flex;
  align-items: center;
  gap: 6px;
  height: 76px;
  padding: 0 21px;
  margin-right: 14px;
  border-radius: 38px;
  background: #101828;
  color: #fff;
}
.github svg { width: 35px; height: 35px; }
.nav-tools { display: flex; }
.icon-btn { display: grid; place-items: center; width: 69px; height: 69px; }

/* Breadcrumb */
.crumb-row {
  display: flex;
  align-items: center;
  justify-content: space-between;
  margin: 40px 0 43px;
}
.crumbs { display: flex; align-items: center; gap: 18px; color: #737373; }
.crumbs svg { width: 24px; height: 24px; }
.crumbs .current { color: #0a0a0a; }

/* Tabs and filters */
.toolbar { display: flex; justify-content: space-between; }
.tabs {
  display: flex;
  width: max-content;
  height: 62px;
  padding: 6px 5px;
  border-radius: 17px;
  background: #f5f5f5;
}
.tabs button { padding: 0 16px; border-radius: 14px; }
.tabs .active {
  background: #fff;
  box-shadow: 0 2px 5px rgba(0, 0, 0, .12);
}
.filters { display: flex; gap: 15px; }
.field {
  display: flex;
  align-items: center;
  gap: 14px;
  height: 62px;
  padding: 0 20px;
  border: 2px solid #e5e5e5;
  border-radius: 14px;
  box-shadow: 0 2px 4px rgba(0, 0, 0, .06);
}
.field select { appearance: none; outline: 0; }
.field-wide { width: 331px; padding-right: 21px; }
.field-wide input { flex: 1; min-width: 0; outline: 0; }
.field-wide input::placeholder { color: #737373; opacity: 1; }

/* Cards */
.card {
  border: 2px solid #e5e5e5;
  border-radius: 24px;
  background: #fff;
  box-shadow: 0 2px 5px rgba(0, 0, 0, .1);
}
.stats {
  display: grid;
  grid-template-columns: repeat(3, 1fr);
  gap: 28px;
  margin: 42px 0;
}
.stat { height: 197px; padding: 40px; }
.stat-head {
  display: flex;
  align-items: center;
  justify-content: space-between;
}
.stat-head svg { color: #737373; }
.stat strong {
  display: block;
  margin-top: 18px;
  font-size: 45px;
  line-height: 55px;
}

.panel { padding: 40px; }
.panel h2 {
  margin: 0 0 14px;
  font-size: 28px;
  line-height: 30px;
  font-weight: 700;
}
.legend {
  display: flex;
  justify-content: flex-end;
  gap: 14px;
  padding: 31px 14px 10px;
  font: 21px/26px "Liberation Sans", sans-serif;
  color: #6b7688;
}
.key { display: flex; align-items: center; gap: 28px; }
.key::before {
  content: "";
  width: 26px;
  height: 26px;
  border-radius: 50%;
}
.key-visits::before { background: #36d399; }
.key-visitors::before { background: #3abff8; }
.plot, .map { width: 100%; height: auto; }
.grid { fill: none; stroke: #f0f0f1; stroke-width: 2; }
.curve { fill: none; stroke-width: 4; }
.curve-visits { stroke: #36d399; }
.curve-visitors { stroke: #3abff8; }

/* Map */
.map path {
  stroke: #f4f6f9;
  stroke-width: 2;
  stroke-linejoin: round;
}
.map .none { fill: #dce3eb; }
.map .orange { fill: #f5b73d; }
.map .pink { fill: #ff6b7f; }
.map .blue { fill: #4c8dff; }
.map .green { fill: #a6ce74; }
.map .teal { fill: #00c29b; }
.map .violet { fill: #6858be; }
.map .border { fill: none; }

.geo {
  display: grid;
  grid-template-columns: minmax(0, 2fr) minmax(0, 1fr);
  column-gap: 55px;
  margin-top: 43px;
}
@media (min-width: 1200px) {
  .geo { grid-template-columns: repeat(3, minmax(0, 1fr)); }
  .geo-map { grid-column: span 2; }
}
.pair {
  display: grid;
  grid-template-columns: repeat(2, minmax(0, 1fr));
  gap: 55px;
  margin-top: 56px;
}
.column { display: flex; flex-direction: column; gap: 14px; }

/* Ranked lists */
.list { flex: 1; overflow: hidden; }
.list-body {
  display: grid;
  grid-template-columns: minmax(0, 1fr) 26px;
  grid-template-rows: 86px 592px;
}
.list table { display: contents; }
.list thead {
  display: block;
  grid-column: 1 / -1;
  border-bottom: 2px solid #e5e5e5;
}
.list thead tr {
  display: flex;
  align-items: center;
  justify-content: space-between;
  height: 84px;
  padding: 0 27px;
}
.list th { padding: 0; font-weight: 400; color: #737373; }
.list tbody { display: block; overflow: hidden; }
.list tbody tr {
  display: grid;
  grid-template-columns: minmax(0, 1fr) auto;
  align-content: start;
  row-gap: 19px;
  height: 107px;
  padding: 15px 27px 0;
  border-bottom: 2px solid #e5e5e5;
}
.list td { display: flex; align-items: center; padding: 0; height: 35px; }
.list td svg, .wordmark { width: 28px; height: 28px; margin: 0 3px; }
.list small { font-size: 17px; font-weight: 500; margin: 4px 7px 0 0; }
.list i { font-size: 21px; font-style: normal; color: #6a7282; margin-left: 9px; }
.list .bar {
  display: block;
  grid-column: 1 / -1;
  height: 14px;
  border-radius: 7px;
  background: #d1d1d1;
  overflow: hidden;
}
.bar div { height: 100%; background: #34d399; }
.list tr:nth-child(n + 2) .bar div { opacity: .96; }
.list-fade tr:nth-child(2) .bar div { opacity: .9; }
.list-fade tr:nth-child(3) .bar div { opacity: .82; }
.list-fade tr:nth-child(4) .bar div { opacity: .72; }
.list-fade tr:nth-child(5) .bar div { opacity: .63; }
.wordmark {
  display: flex;
  align-items: center;
  justify-content: center;
  font-family: Inter, sans-serif;
  font-size: 16px;
  font-weight: 600;
}
.wordmark-small { font-size: 8px; }

.scroll {
  display: flex;
  flex-direction: column;
  align-items: center;
  padding: 9px 0;
  background: #fcfcfc;
}
.up, .down {
  width: 16px;
  height: 12px;
  background: #8b8b8b;
  clip-path: polygon(50% 0, 100% 85%, 95% 100%, 5% 100%, 0 85%);
}
.down { margin-top: auto; clip-path: polygon(50% 100%, 100% 15%, 95% 0, 5% 0, 0 15%); }
.thumb {
  width: 16px;
  height: 291px;
  margin-top: 11px;
  border-radius: 8px;
  background: #8b8b8b;
}

.more {
  display: flex;
  align-items: center;
  justify-content: center;
  gap: 28px;
  width: 100%;
  height: 62px;
  margin: 14px 0 11px;
}
.more svg { width: 28px; height: 28px; }
```
